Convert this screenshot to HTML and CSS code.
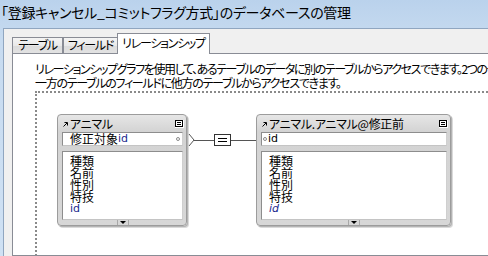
FILE: index.html
```html
<!DOCTYPE html>
<html lang="ja">
<head>
  <meta charset="UTF-8">
  <meta name="viewport" content="width=device-width, initial-scale=1.0">
  <title>データベースの管理</title>
  <link rel="stylesheet" href="styles.css">
</head>
<body>
  <div class="window">
    <div class="titlebar">「登録キャンセル_コミットフラグ方式」のデータベースの管理</div>
    <div class="client">
      <div class="tabs">
        <div class="tab tab-1">テーブル</div>
        <div class="tab tab-2">フィールド</div>
        <div class="tab active">リレーションシップ</div>
      </div>
      <div class="panel">
        <div class="desc">
          <p class="desc-line tight">リレーションシップグラフを使用して、あるテーブルのデータに別のテーブルからアクセスできます。2つのテーブルの関連するデータを結び付けると、</p>
          <p class="desc-line">一方のテーブルのフィールドに他方のテーブルからアクセスできます。</p>
        </div>
        <div class="graph">
          <div class="tbl tbl-left">
            <div class="tbl-head">
              <svg class="ico-go" width="5" height="5" viewBox="0 0 5 5"><path d="M0.5 4.5L4 1M1.5 0.5H4.5V3.5" stroke="#000" fill="none"/></svg>
              <span class="tbl-name">アニマル</span>
              <svg class="ico-btn" width="9" height="8" viewBox="0 0 9 8"><rect x="0" y="0" width="9" height="8" fill="#fff"/><rect x="0.5" y="0.5" width="7" height="6" fill="none" stroke="#000"/><path d="M2 2.5H6M2 4.5H6" stroke="#000"/></svg>
            </div>
            <div class="tbl-key">修正対象<span class="fld-id">id</span><span class="key-dot right"></span></div>
            <ul class="tbl-fields">
              <li>種類</li>
              <li>名前</li>
              <li>性別</li>
              <li>特技</li>
              <li class="fld-id">id</li>
            </ul>
            <div class="tbl-foot">
              <svg width="12" height="5" viewBox="0 0 12 5"><path d="M0.5 0V5M11.5 0V5" stroke="#a8a8a8"/><path d="M3 1H9L6 4Z" fill="#000"/></svg>
            </div>
          </div>
          <svg class="link" width="69" height="14" viewBox="0 0 69 14" shape-rendering="crispEdges">
            <path d="M2 1L7 7L2 13M7 7.5H27M44 7.5H69" stroke="#555" fill="none" shape-rendering="auto"/>
            <rect x="27.5" y="1.5" width="16" height="11" fill="#fff" stroke="#333"/>
            <path d="M31 5.5H40M31 8.5H40" stroke="#000"/>
          </svg>
          <div class="tbl tbl-right">
            <div class="tbl-head">
              <svg class="ico-go" width="5" height="5" viewBox="0 0 5 5"><path d="M0.5 4.5L4 1M1.5 0.5H4.5V3.5" stroke="#000" fill="none"/></svg>
              <span class="tbl-name">アニマル.アニマル@修正前</span>
              <svg class="ico-btn" width="9" height="8" viewBox="0 0 9 8"><rect x="0" y="0" width="9" height="8" fill="#fff"/><rect x="0.5" y="0.5" width="7" height="6" fill="none" stroke="#000"/><path d="M2 2.5H6M2 4.5H6" stroke="#000"/></svg>
            </div>
            <div class="tbl-key key-left"><span class="key-dot"></span><span class="fld-id plain">id</span></div>
            <ul class="tbl-fields">
              <li>種類</li>
              <li>名前</li>
              <li>性別</li>
              <li>特技</li>
              <li class="fld-id italic">id</li>
            </ul>
            <div class="tbl-foot">
              <svg width="12" height="5" viewBox="0 0 12 5"><path d="M0.5 0V5M11.5 0V5" stroke="#a8a8a8"/><path d="M3 1H9L6 4Z" fill="#000"/></svg>
            </div>
          </div>
        </div>
      </div>
    </div>
  </div>
</body>
</html>
```

FILE: styles.css
```css
* {
  margin: 0;
  padding: 0;
  box-sizing: border-box;
}
body {
  width: 488px;
  height: 256px;
  overflow: hidden;
  font-family: "Noto Sans CJK JP", sans-serif;
  font-feature-settings: "palt" 1;
  font-size: 12px;
  color: #000;
}
.window {
  height: 256px;
  display: flex;
  flex-direction: column;
  background: linear-gradient(#bad2ec, #c7dbf0 40px, #cfe1f4);
}
.titlebar {
  height: 28px;
  padding: 4px 0 0 1px;
  font-size: 14px;
  line-height: 17px;
  letter-spacing: -0.3px;
  white-space: nowrap;
}
.client {
  flex: 1;
  margin-left: 3px;
  border-left: 1px solid #90a6c0;
  border-top: 1px solid #90a6c0;
  background: #f0f0f0;
  padding: 4px 0 0 8px;
  display: flex;
  flex-direction: column;
  overflow: hidden;
}
.tabs {
  display: flex;
  align-items: flex-end;
  height: 20px;
}
.tab {
  height: 16px;
  border: 1px solid #898c95;
  border-bottom: none;
  background: linear-gradient(#f4f4f4, #e9e9e9 50%, #dcdcdc 51%, #e2e2e2);
  text-align: center;
  line-height: 14px;
  letter-spacing: -1.3px;
  white-space: nowrap;
}
.tab-1 {
  width: 51px;
}
.tab-2 {
  width: 55px;
}
.tab.active {
  width: 93px;
  height: 21px;
  margin: 0 0 -1px -1px;
  background: #fff;
  line-height: 18px;
  position: relative;
  z-index: 1;
}
.panel {
  flex: 1;
  width: 560px;
  background: #fff;
  border: 1px solid #898c95;
  border-right: none;
  padding: 8px 0 0 22px;
  overflow: hidden;
}
.desc-line {
  line-height: 14px;
  letter-spacing: -1.3px;
  white-space: nowrap;
}
.desc-line.tight {
  letter-spacing: -1.4px;
}
.graph {
  margin-top: 1px;
  width: 520px;
  height: 220px;
  border: 2px dotted #8a8a8a;
  padding: 21px 0 0 20px;
  display: flex;
  align-items: flex-start;
}
.tbl {
  height: 112px;
  border: 1px solid #9c9c9c;
  border-radius: 4px;
  background: linear-gradient(#e6e6e6, #d3d3d3 17px, #d7d7d7);
  box-shadow: 1px 1px 0 #b4b4b4, 2px 2px 0 #dadada;
  padding: 0 3px 0 4px;
  display: flex;
  flex-direction: column;
}
.tbl-left {
  width: 130px;
}
.tbl-right {
  width: 195px;
}
.tbl-head {
  height: 17px;
  display: flex;
  align-items: center;
  line-height: 16px;
}
.ico-go {
  margin: 1px 2px 0 1px;
}
.tbl-name {
  flex: 1;
  letter-spacing: -0.3px;
  white-space: nowrap;
}
.ico-btn {
  margin: 1px -1px 0 0;
}
.tbl-key {
  height: 14px;
  background: #fff;
  border: 1px solid #8d8d8d;
  border-right-color: #d0d0d0;
  border-bottom-color: #c4c4c4;
  padding-left: 7px;
  line-height: 12px;
  display: flex;
  align-items: center;
}
.key-left {
  padding-left: 1px;
}
.key-dot {
  width: 4px;
  height: 4px;
  border: 1px solid #8a8a8a;
  border-radius: 50%;
}
.key-dot.right {
  margin-left: auto;
  margin-right: 2px;
}
.key-left .key-dot {
  margin-right: 1px;
}
.fld-id {
  font-family: "DejaVu Sans", "Noto Sans CJK JP", sans-serif;
  font-size: 11px;
  color: #1c2a8e;
}
.fld-id.italic {
  font-style: italic;
}
.tbl-key .fld-id.plain {
  color: #000;
}
.tbl-fields {
  list-style: none;
  margin-top: 5px;
  height: 69px;
  background: #fff;
  border: 1px solid #8d8d8d;
  border-right-color: #cfcfcf;
  border-bottom-color: #c4c4c4;
  padding: 3px 0 0 7px;
  line-height: 12px;
}
.tbl-fields li {
  height: 12px;
}
.tbl-foot {
  flex: 1;
  display: flex;
  justify-content: center;
  align-items: flex-start;
}
.link {
  margin-top: 19px;
  flex-shrink: 0;
}
```
